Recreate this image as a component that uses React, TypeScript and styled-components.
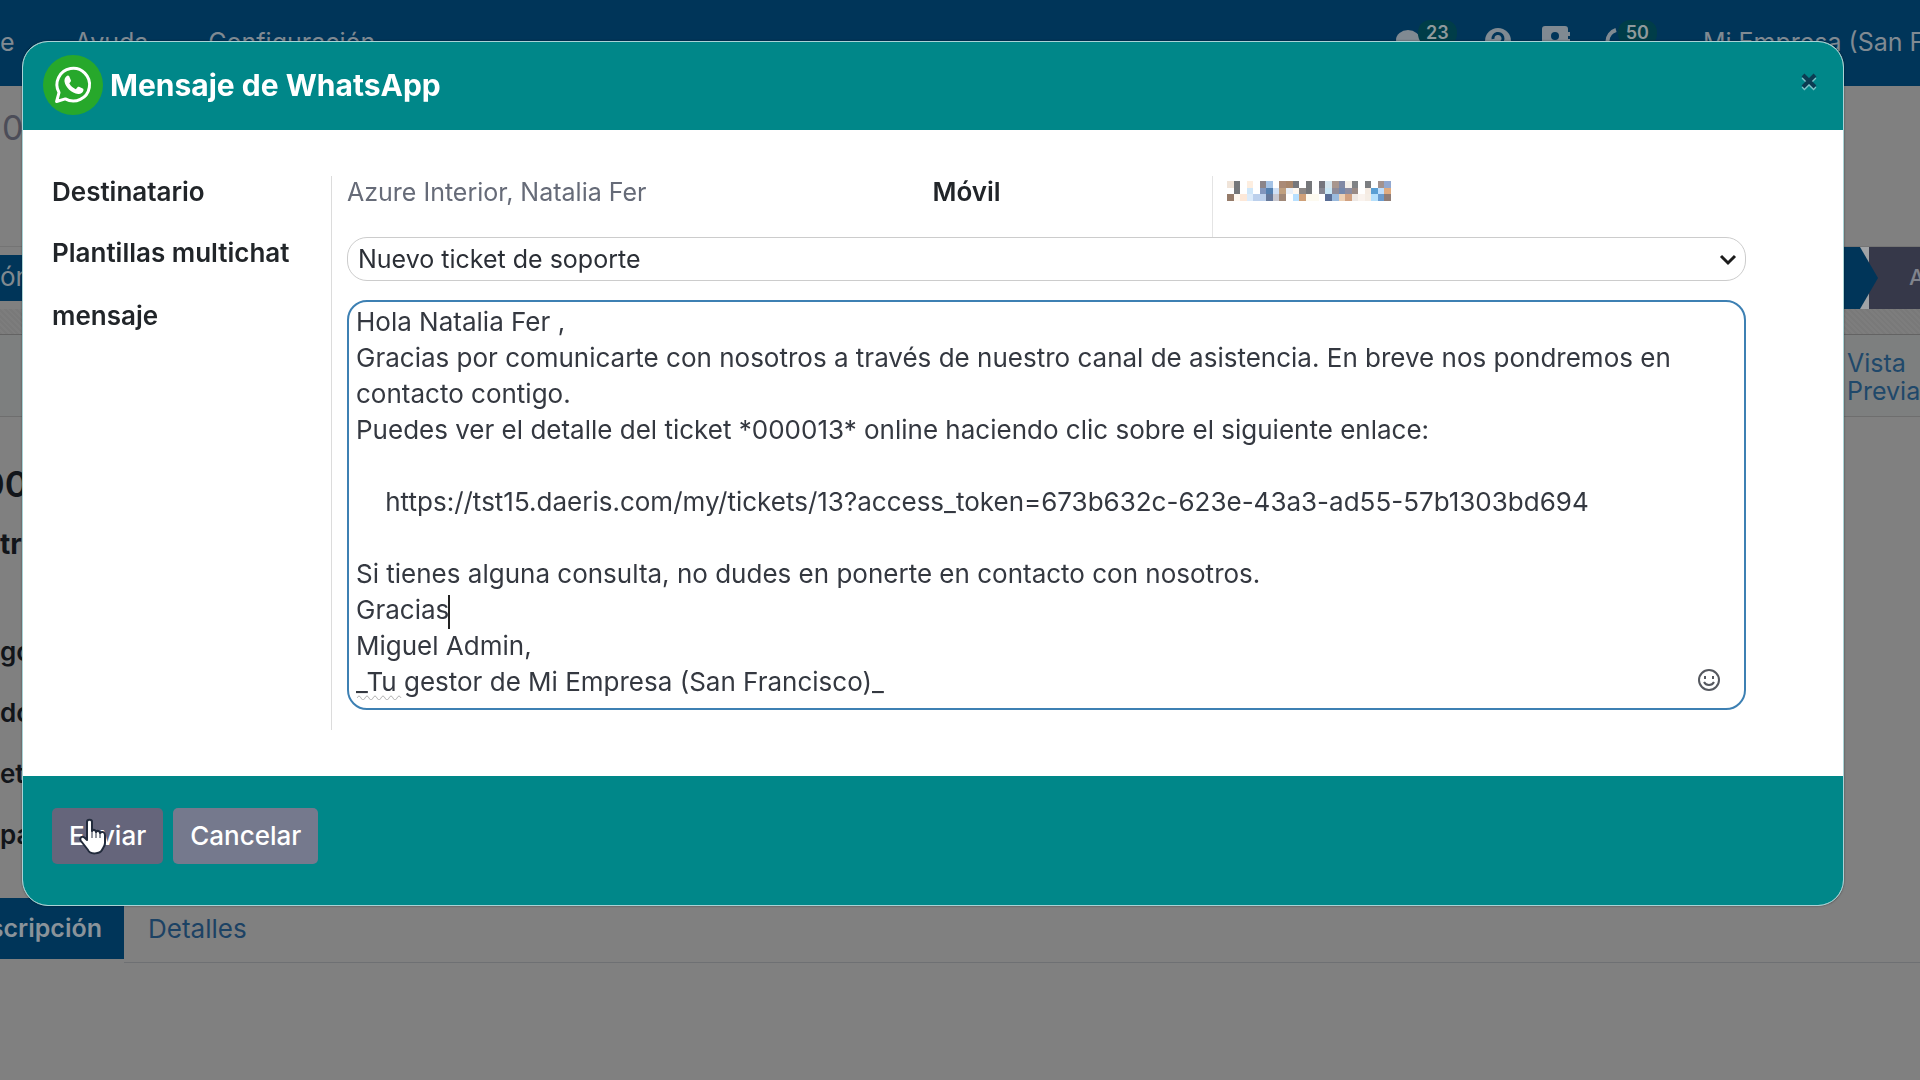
import React from "react";
import styled, { createGlobalStyle } from "styled-components";

const GlobalStyle = createGlobalStyle`
  * { box-sizing: border-box; }
  body {
    margin: 0;
    background: #808080;
    font: 400 26px/32px Inter, "Open Sans", sans-serif;
    color: #212529;
    overflow: hidden;
  }
  button, select, textarea { font: inherit; }
  h1, h2, p { margin: 0; }
  a { color: inherit; text-decoration: none; }
  svg { display: block; flex: none; }
`;

/* ---------- Dimmed page behind the dialog ---------- */

const Page = styled.div`
  min-height: 100vh;
  background: #808080;
  overflow: hidden;
`;

const NavBar = styled.nav`
  display: flex;
  justify-content: space-between;
  height: 86px;
  padding-top: 26px;
  background: #003559;
  color: #808a92;
  font-size: 25px;
  white-space: nowrap;
`;

const NavMenu = styled.div`
  display: flex;
  gap: 60px;
`;

const NavTray = styled.div`
  display: flex;
  gap: 28px;
  width: 524px;
  flex: none;
`;

const TrayButton = styled.a`
  display: flex;
  flex: none;
`;

const Badge = styled.span`
  align-self: flex-start;
  margin: -6px 0 0 -4px;
  padding: 0 8px;
  border-radius: 12px;
  background: #003d48;
  color: #8f9a9c;
  font-size: 18px;
  font-weight: 600;
  line-height: 26px;
`;

const Company = styled.a`
  margin-left: 18px;
`;

const Breadcrumb = styled.div`
  height: 161px;
  padding: 26px 2px;
  border-bottom: 1px solid #747474;
  color: #4c4d58;
  font-size: 34px;
`;

const StatusBar = styled.div`
  display: flex;
  justify-content: space-between;
  height: 62px;
`;

const StatusAction = styled.button`
  width: 60px;
  height: 46px;
  margin-top: 8px;
  padding: 0 0 2px;
  border: 0;
  background: #003559;
  color: #80898f;
  text-align: left;
`;

const Steps = styled.div`
  display: flex;
  width: 120px;
`;

const StepArrow = styled.svg`
  flex: none;
  width: 80px;
  height: 62px;
`;

const Step = styled.span`
  flex: 1;
  padding-left: 29px;
  background: #363849;
  color: #80838c;
  font-size: 22px;
  font-weight: 500;
  line-height: 60px;
`;

const Band = styled.div`
  height: 26px;
  border-bottom: 1px solid #636363;
  background: repeating-linear-gradient(45deg, #797979 0 2px, #7d7d7d 2px 4px);
`;

const StatBox = styled.div`
  display: flex;
  justify-content: flex-end;
  height: 82px;
  padding-top: 14px;
  border-bottom: 1px solid #6e6e6e;
  background: #7d7f7f;
  color: #20486a;
  font-size: 25px;
  line-height: 28px;
`;

const StatLink = styled.a`
  width: 73px;
`;

const Sheet = styled.div`
  height: 481px;
  padding-top: 45px;
  color: #12151a;
`;

const TicketTitle = styled.h1`
  margin-left: -19px;
  font-size: 36px;
  font-weight: 600;
  line-height: 44px;
`;

const TicketSubject = styled.h2`
  padding: 22px 0;
  font-size: 28px;
  font-weight: 700;
`;

const SheetLabels = styled.div`
  display: grid;
  gap: 29px;
  margin-top: 54px;
  font-weight: 600;
`;

const Tabs = styled.div`
  display: flex;
  height: 65px;
`;

const ActiveTab = styled.a`
  display: flex;
  justify-content: flex-end;
  width: 124px;
  height: 61px;
  padding: 14px 22px 0 0;
  background: #003559;
  color: #8a939a;
  font-size: 25px;
  font-weight: 600;
`;

const Tab = styled.a`
  flex: 1;
  padding: 15px 24px 0;
  border-bottom: 1px solid #6e7073;
  color: #1c4264;
`;

/* ---------- Dialog ---------- */

const Overlay = styled.div`
  position: fixed;
  inset: 0;
  padding: 41px 76px 41px 22px;
`;

const Dialog = styled.section`
  border: 1px solid #a9d3d6;
  border-radius: 26px;
  overflow: hidden;
  background: #fff;
  box-shadow: 0 0 2px rgba(0, 0, 0, 0.5);
`;

const DialogHeader = styled.header`
  display: flex;
  align-items: center;
  gap: 7px;
  height: 88px;
  padding: 0 24px 2px 20px;
  background: #008789;
`;

const DialogTitle = styled.h2`
  flex: 1;
  color: #fff;
  font-size: 30px;
  font-weight: 700;
  line-height: 40px;
`;

const CloseButton = styled.button`
  display: flex;
  padding: 0;
  border: 0;
  margin-bottom: 8px;
  background: none;
`;

const Form = styled.form`
  display: grid;
  grid-template-columns: 279px 1fr;
  padding: 46px 97px 46px 29px;
`;

const Label = styled.label`
  font-weight: 600;
`;

const Cell = styled.div<{ $gap: number }>`
  padding: 0 0 ${(p) => p.$gap}px 15px;
  border-left: 1px solid #dcdcdc;
`;

const Contact = styled.div`
  display: grid;
  grid-template-columns: 585fr 279fr 534fr;
  height: 61px;
`;

const Recipient = styled.a`
  color: #666b78;
  font-size: 25px;
`;

const Mobile = styled.div`
  padding: 5px 14px 0;
  border-left: 1px solid #e4e4e4;
`;

const SelectBox = styled.div`
  position: relative;
`;

const Select = styled.select`
  display: block;
  width: 100%;
  height: 44px;
  padding: 0 10px;
  border: 1px solid #ccc;
  border-radius: 20px;
  appearance: none;
  background: #fff;
  color: #2b2f36;
  font-size: 25px;
`;

const Chevron = styled.svg`
  position: absolute;
  right: 9px;
  top: 16px;
  pointer-events: none;
`;

const MessageBox = styled.div`
  position: relative;
`;

const Message = styled.textarea`
  display: block;
  width: 100%;
  height: 410px;
  padding: 2px 7px 0;
  border: 2px solid #3d80b3;
  border-radius: 20px;
  outline: 0;
  resize: none;
  overflow: hidden;
  color: #343840;
  line-height: 36px;
`;

const Caret = styled.i`
  position: absolute;
  left: 101px;
  top: 295px;
  width: 2px;
  height: 34px;
  background: #222;
`;

const Squiggle = styled.svg`
  position: absolute;
  left: 10px;
  bottom: 10px;
`;

const EmojiButton = styled.button`
  position: absolute;
  right: 26px;
  bottom: 19px;
  display: flex;
  padding: 0;
  border: 0;
  background: none;
`;

const DialogFooter = styled.footer`
  display: flex;
  align-items: flex-start;
  gap: 10px;
  height: 129px;
  padding: 32px 29px;
  background: #008789;
`;

const Button = styled.button<{ $active?: boolean }>`
  position: relative;
  height: 56px;
  padding: 0 17px;
  border: 0;
  border-radius: 5px;
  background: ${(p) => (p.$active ? "#65657b" : "#75798d")};
  color: #fff;
  font-weight: 500;
`;

const Pointer = styled.svg`
  position: absolute;
  left: 27px;
  top: 10px;
`;

const W = "#fff";
const MOSAIC = [
  ["#f0e4d9", "#75777a", W, "#fdeee0", W, "#8b8489", "#a5c3e6", W, "#aa8a76", "#a8866b", "#76777b", W, "#75777a", W, "#75757d", "#d5e5ee", "#a8968e", "#8189a5", "#f5f0ea", "#808285", W, "#7b7d80", W, "#a3938f", "#92a8d0"],
  [W, "#75777a", W, "#cfe6f8", W, "#8296bd", "#5480b0", "#d0e0f5", "#c0a080", "#e8f0fa", "#fff8f0", "#8c8785", "#75777a", W, "#858590", "#c8e6f5", "#8e8b98", "#7488ad", "#8c8ca0", "#998a85", W, "#f5ebe2", "#5a9fd4", "#bfe0ff", "#dfab80"],
  ["#957b6a", "#fff8f0", "#fde8d8", "#dcebfa", "#bcd0ec", "#bcd0ec", "#65789a", "#c8c8d0", "#a08878", W, "#b8e0ff", "#cfa078", "#fdfaf0", "#fdfaf0", W, "#5a6e96", "#9abadd", "#ecd0b5", "#d0a080", "#eee8e4", "#faf3ee", "#f5ede5", "#b5e0fc", "#6a9cd0", "#907d76"],
];

const MESSAGE = `Hola Natalia Fer ,
Gracias por comunicarte con nosotros a través de nuestro canal de asistencia. En breve nos pondremos en contacto contigo.
Puedes ver el detalle del ticket *000013* online haciendo clic sobre el siguiente enlace:

    https://tst15.daeris.com/my/tickets/13?access_token=673b632c-623e-43a3-ad55-57b1303bd694

Si tienes alguna consulta, no dudes en ponerte en contacto con nosotros.
Gracias
Miguel Admin,
_Tu gestor de Mi Empresa (San Francisco)_`;

function BackgroundPage() {
  return (
    <Page>
      <NavBar>
        <NavMenu>
          <a href="#e">e</a>
          <a href="#ayuda">Ayuda</a>
          <a href="#configuracion">Configuración</a>
        </NavMenu>
        <NavTray>
          <TrayButton href="#mensajes" aria-label="Mensajes">
            <svg width="26" height="26" viewBox="0 0 26 26">
              <ellipse cx="12" cy="14" rx="12" ry="10" fill="#808a92" />
            </svg>
            <Badge>23</Badge>
          </TrayButton>
          <TrayButton href="#soporte" aria-label="Soporte">
            <svg width="26" height="28" viewBox="0 0 26 28">
              <circle cx="13" cy="15" r="13" fill="#808a92" />
              <path d="M8 13a5 5 0 1 1 7 4l-2 1v2" fill="none" stroke="#003559" strokeWidth="3" />
            </svg>
          </TrayButton>
          <TrayButton href="#contactos" aria-label="Contactos">
            <svg width="31" height="28" viewBox="0 0 31 28">
              <path d="M6 0h20a3 3 0 0 1 3 3v3h2v4h-2v3h2v4h-2v10H6a3 3 0 0 1-3-3V3a3 3 0 0 1 3-3Z" fill="#808a92" />
              <circle cx="16" cy="10" r="4" fill="#003559" />
              <path d="M9 22c0-9 14-9 14 0Z" fill="#003559" />
            </svg>
          </TrayButton>
          <TrayButton href="#actividades" aria-label="Actividades">
            <svg width="24" height="28" viewBox="0 0 24 28">
              <path d="M18 4A12 12 0 0 0 18 27" fill="none" stroke="#808a92" strokeWidth="4" />
            </svg>
            <Badge>50</Badge>
          </TrayButton>
          <Company href="#empresa">Mi Empresa (San F</Company>
        </NavTray>
      </NavBar>
      <Breadcrumb>0</Breadcrumb>
      <StatusBar>
        <StatusAction type="button">ón</StatusAction>
        <Steps>
          <StepArrow viewBox="0 0 80 62">
            <path d="M69 0h11v62H69Z" fill="#363849" />
            <path d="M60 0h9v62h-9Z" fill="#a0a3a6" />
            <path d="M0 0H60L78 31 60 62H0Z" fill="#003559" />
          </StepArrow>
          <Step>A</Step>
        </Steps>
      </StatusBar>
      <Band />
      <StatBox>
        <StatLink href="#vista">Vista Previa</StatLink>
      </StatBox>
      <Sheet>
        <TicketTitle>00</TicketTitle>
        <TicketSubject>tr</TicketSubject>
        <SheetLabels>
          <span>go</span>
          <span>do</span>
          <span>ete</span>
          <span>pa</span>
        </SheetLabels>
      </Sheet>
      <Tabs>
        <ActiveTab href="#descripcion">scripción</ActiveTab>
        <Tab href="#detalles">Detalles</Tab>
      </Tabs>
    </Page>
  );
}

function WhatsAppLogo() {
  return (
    <svg width="60" height="60" viewBox="0 0 60 60" aria-label="WhatsApp">
      <circle cx="30" cy="30" r="30" fill="#27a82b" />
      <path d="M13.600 46.500 16 37.600A16.300 16.300 0 1 1 22.300 43.900Z" fill="none" stroke="#fff" strokeWidth="3" strokeLinejoin="round" />
      <path d="M23.500 21.200c.8-.9 2.200-.9 2.700.1l1.700 3.900c.2.500.1 1-.3 1.500l-1.300 1.600c1.400 2.700 3.500 4.700 6.500 5.900l1.700-2c.4-.5.9-.6 1.500-.4l3.700 1.800c.8.400.9 1 .7 1.900-.6 2.400-2.900 3.800-5.200 3.500-6.600-.8-12.800-6.700-13.700-12.600-.3-2 .6-4 2-5.200Z" fill="#fff" />
    </svg>
  );
}

function Mosaic() {
  return (
    <svg width="164" height="20" viewBox="0 0 25 3" preserveAspectRatio="none" shapeRendering="crispEdges" aria-label="Número oculto">
      {MOSAIC.map((row, y) => row.map((fill, x) => <rect key={`${x}-${y}`} x={x} y={y} width="1" height="1" fill={fill} />))}
    </svg>
  );
}

export default function App() {
  return (
    <>
      <GlobalStyle />
      <BackgroundPage />
      <Overlay>
        <Dialog role="dialog" aria-labelledby="title">
          <DialogHeader>
            <WhatsAppLogo />
            <DialogTitle id="title">Mensaje de WhatsApp</DialogTitle>
            <CloseButton type="button" aria-label="Cerrar">
              <svg width="20" height="20" viewBox="0 0 20 20" fill="none" strokeWidth="4">
                <path d="M4 6 16 18M16 6 4 18" stroke="#7cc4c8" />
                <path d="M4 4 16 16M16 4 4 16" stroke="#0b3c52" />
              </svg>
            </CloseButton>
          </DialogHeader>
          <Form id="composer">
            <Label as="span">Destinatario</Label>
            <Cell $gap={0}>
              <Contact>
                <Recipient href="#contacto">Azure Interior, Natalia Fer</Recipient>
                <Label as="span">Móvil</Label>
                <Mobile>
                  <Mosaic />
                </Mobile>
              </Contact>
            </Cell>
            <Label htmlFor="template">Plantillas multichat</Label>
            <Cell $gap={19}>
              <SelectBox>
                <Select id="template" defaultValue="new">
                  <option value="new">Nuevo ticket de soporte</option>
                </Select>
                <Chevron width="18" height="14" viewBox="0 0 18 14">
                  <path d="m2 3 7 7 7-7" fill="none" stroke="#1c1c1c" strokeWidth="3" />
                </Chevron>
              </SelectBox>
            </Cell>
            <Label htmlFor="message">mensaje</Label>
            <Cell $gap={20}>
              <MessageBox>
                <Message id="message" spellCheck={false} defaultValue={MESSAGE} />
                <Caret />
                <Squiggle width="46" height="5" viewBox="0 0 46 5">
                  <path d="M0 3q2-4 4 0t4 0 4 0 4 0 4 0 4 0 4 0 4 0 4 0 4 0 4 0" fill="none" stroke="#b5b5b5" />
                </Squiggle>
                <EmojiButton type="button" aria-label="Insertar emoji">
                  <svg width="22" height="22" viewBox="0 0 22 22" fill="none" stroke="#55585f" strokeWidth="2">
                    <circle cx="11" cy="11" r="10" />
                    <path d="M6 13c2 4 8 4 10 0" />
                    <path d="M7 7v3M15 7v3" />
                  </svg>
                </EmojiButton>
              </MessageBox>
            </Cell>
          </Form>
          <DialogFooter>
            <Button type="submit" form="composer" $active>
              Enviar
              <Pointer width="28" height="38" viewBox="0 0 28 38">
                <path
                  d="M8 4c0-3 5-3 5 0v9c1-2 4-1 4 1 1-2 4-1 4 1 2-2 5-1 5 2v8c0 3-2 5-3 7-2 4-12 5-14 0L2 23c-2-3 1-6 4-3l2 2Z"
                  fill="#fff"
                  stroke="#222b3c"
                  strokeWidth="2"
                  strokeLinejoin="round"
                />
                <path d="M13 13v7M17 14v6M21 15v5" stroke="#222b3c" strokeWidth="1" />
              </Pointer>
            </Button>
            <Button type="button">Cancelar</Button>
          </DialogFooter>
        </Dialog>
      </Overlay>
    </>
  );
}
